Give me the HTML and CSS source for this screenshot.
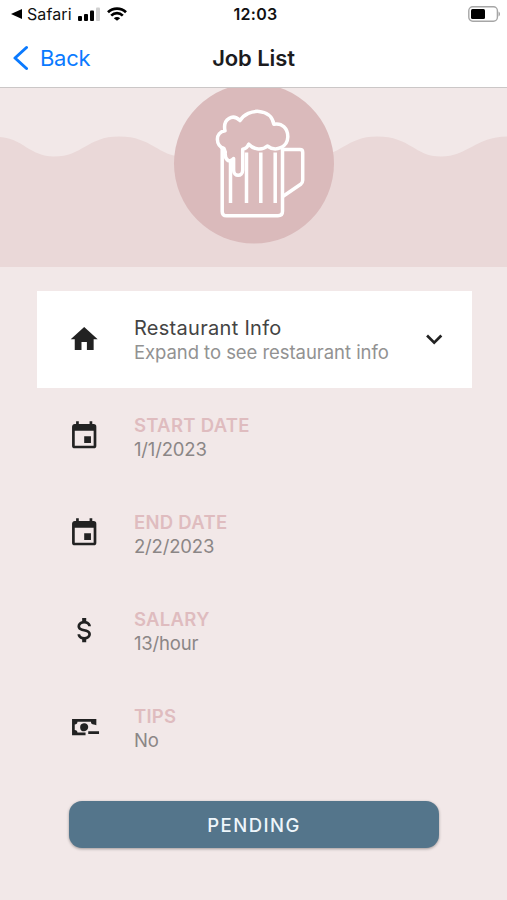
FILE: index.html
```html
<!DOCTYPE html>
<html lang="en">
<head>
  <meta charset="UTF-8">
  <meta name="viewport" content="width=device-width, initial-scale=1.0">
  <title>Job List</title>
  <link rel="stylesheet" href="styles.css">
</head>
<body>
  <div class="status-bar">
    <div class="status-left">
      <svg class="back-app" width="11" height="10" viewBox="0 0 11 10"><path d="M0 5 11 0v10z"/></svg>
      <span class="app-name">Safari</span>
      <svg class="signal" width="22" height="14" viewBox="0 0 22 14">
        <rect x="0" y="9" width="4" height="5" rx="1"/>
        <rect x="6" y="7" width="4" height="7" rx="1"/>
        <rect x="12" y="3.5" width="4" height="10.5" rx="1"/>
        <rect x="18" y="0.5" width="4" height="13.5" rx="1" fill="#d0d0d0"/>
      </svg>
      <svg width="20" height="14" viewBox="0 0 20 14" fill="none" stroke="#000" stroke-width="2.7">
        <path d="M1 5.2C6 .3 14 .3 19 5.2M4.2 8.6c3.3-3.2 8.3-3.2 11.6 0"/>
        <path d="M10 13.8 6.8 11.3c1.8-1.7 4.6-1.7 6.4 0z" fill="#000" stroke="none"/>
      </svg>
    </div>
    <span class="time">12:03</span>
    <svg class="battery" width="33" height="16" viewBox="0 0 33 16">
      <rect x="1.800" y="0.8" width="28.6" height="14.4" rx="4" fill="none" stroke="#a6a6a6" stroke-width="1.4"/>
      <rect x="4" y="3" width="14" height="10" rx="1.5"/>
      <path d="M31.500 5.5c2 .8 2 4.200 0 5z" fill="#a6a6a6"/>
    </svg>
  </div>

  <header>
    <a class="back">
      <svg width="16" height="26" viewBox="0 0 16 26"><path d="M14.500 2.500 3 13l11.500 10.500" fill="none" stroke="#0a7aff" stroke-width="3" stroke-linecap="round" stroke-linejoin="round"/></svg>
      <span>Back</span>
    </a>
    <h1>Job List</h1>
  </header>

  <svg class="banner" width="507" height="179" viewBox="0 88 507 179">
    <path fill="#ead8d8" d="M0 137C22 138 30 156.500 54 156.500C83 156.500 87 136.500 119 136.500C153 136.500 157 156.500 184 156.500C212 156.500 218 136.500 249 136.500C281 136.500 286 156.500 313 156.500C341 156.500 346 136.500 377 136.500C411 136.500 414 156.500 441 156.500C467 156.500 476 137 507 136.500V267H0z"/>
    <circle cx="254" cy="163.5" r="80" fill="#dababb"/>
    <g fill="none" stroke="#fff" stroke-width="3.5" stroke-linejoin="round" stroke-linecap="round">
      <path d="M222.200 148V211.500q0 4.300 4.300 4.300h51.500q4.500 0 4.500-4.500V149"/>
      <path d="M283 149.600h17q2.700 0 2.700 2.700v28q0 2.500-2 4L283.500 196"/>
      <path d="M230.500 160v43M246.500 152.500v50.500M260.800 152.500v50.500M275.200 152.500v50.500" stroke-linecap="butt"/>
      <path d="M224 148.500C215.500 146 214.500 132.500 225 130.800C222.500 118.500 233 113.500 240 120.600C248 107.500 271 108 273.800 124.200C282 122.500 288 128.500 287.800 137C287.500 147 276 152.500 267.300 146C262.500 150.500 254 150 248.700 144.200Q247 148.800 242.700 149.300V170C242.700 177 233.600 177 233.600 170V158.500Q231.500 161.500 228 160.500Q224.500 158 225.300 152z"/>
    </g>
  </svg>

  <main>
    <div class="row card">
      <svg class="icon" viewBox="0 0 24 24"><path d="M10 20v-6h4v6h5v-8h3L12 3 2 12h3v8z"/></svg>
      <div class="text">
        <div class="name">Restaurant Info</div>
        <div class="value expand">Expand to see restaurant info</div>
      </div>
      <svg class="icon" viewBox="0 0 24 24"><path d="M7.410 8.580 12 13.170l4.590-4.590L18 10l-6 6-6-6z"/></svg>
    </div>
    <div class="row">
      <svg class="icon" viewBox="0 0 24 24"><path d="M19 19H5V8h14m-3-7v2H8V1H6v2H5c-1.110 0-2 .89-2 2v14a2 2 0 0 0 2 2h14a2 2 0 0 0 2-2V5a2 2 0 0 0-2-2h-1V1m-1 11h-5v5h5z"/></svg>
      <div class="text">
        <div class="label">START DATE</div>
        <div class="value">1/1/2023</div>
      </div>
    </div>
    <div class="row">
      <svg class="icon" viewBox="0 0 24 24"><path d="M19 19H5V8h14m-3-7v2H8V1H6v2H5c-1.110 0-2 .89-2 2v14a2 2 0 0 0 2 2h14a2 2 0 0 0 2-2V5a2 2 0 0 0-2-2h-1V1m-1 11h-5v5h5z"/></svg>
      <div class="text">
        <div class="label">END DATE</div>
        <div class="value">2/2/2023</div>
      </div>
    </div>
    <div class="row">
      <svg class="icon" viewBox="0 0 24 24"><path d="M7 15h2c0 1.080 1.370 2 3 2s3-.92 3-2c0-1.100-1.040-1.500-3.240-2.030C9.640 12.440 7 11.780 7 9c0-1.790 1.470-3.310 3.500-3.820V3h3v2.180C15.530 5.690 17 7.210 17 9h-2c0-1.080-1.370-2-3-2s-3 .92-3 2c0 1.100 1.040 1.500 3.240 2.030C14.360 11.560 17 12.220 17 15c0 1.790-1.470 3.310-3.500 3.820V21h-3v-2.180C8.470 18.310 7 16.790 7 15z"/></svg>
      <div class="text">
        <div class="label">SALARY</div>
        <div class="value">13/hour</div>
      </div>
    </div>
    <div class="row">
      <svg class="icon" viewBox="0 0 24 24"><path d="M15 15v2h8v-2zM14.970 11.610A3 3 0 1 0 12 15c1.100 0 2.200-.8 2.600-1.700q.4-.9.370-1.690M13 16H7a2 2 0 0 0-2-2v-4a2 2 0 0 0 2-2h10a2 2 0 0 0 2 2v.06c.67 0 1.340.2 2 .5V6H3v12h10z"/></svg>
      <div class="text">
        <div class="label">TIPS</div>
        <div class="value">No</div>
      </div>
    </div>
    <button class="pending">PENDING</button>
  </main>
</body>
</html>
```
FILE: styles.css
```css
body {
  margin: 0;
  height: 900px;
  overflow: hidden;
  background: #f2e8e8;
  font-family: 'Inter', sans-serif;
}

svg {
  display: block;
  flex-shrink: 0;
}

.status-bar {
  display: grid;
  grid-template-columns: 1fr auto 1fr;
  align-items: center;
  height: 28px;
  padding: 0 7px 0 11px;
  background: #fff;
  color: #111;
}

.status-left {
  display: flex;
  align-items: center;
}

.app-name {
  margin: 0 6px 0 5px;
  font-size: 16px;
  letter-spacing: 0.1px;
}

.signal {
  margin-right: 7px;
}

.time {
  font-size: 16px;
  font-weight: 600;
  letter-spacing: 0.3px;
}

.battery {
  justify-self: end;
}

header {
  display: grid;
  grid-template-columns: 1fr auto 1fr;
  align-items: center;
  height: 59px;
  padding: 0 12px;
  background: #fff;
  border-bottom: 1px solid #cbc7c7;
}

.back {
  display: flex;
  align-items: center;
  gap: 12px;
  color: #0a7aff;
  font-size: 22px;
  letter-spacing: -0.3px;
}

h1 {
  margin: 0;
  font-size: 22px;
  font-weight: 600;
  letter-spacing: -0.1px;
  color: #1c1c1e;
}

main {
  padding: 24px 35px 0 37px;
}

.row {
  display: flex;
  align-items: center;
  height: 97px;
  padding: 0 22px 0 31px;
  box-sizing: border-box;
}

.card {
  background: #fff;
}

.icon {
  width: 32.4px;
  height: 32.4px;
  margin-top: -1px;
  fill: #222;
}

.text {
  flex: 1;
  margin-left: 33.5px;
  font-size: 18.5px;
  line-height: 24px;
  white-space: nowrap;
}

.name {
  font-size: 20px;
  letter-spacing: 0.3px;
  color: #444;
}

.label {
  font-weight: 600;
  letter-spacing: 0.3px;
  color: #dfbcbf;
}

.value {
  letter-spacing: -0.15px;
  color: #8b8686;
}

.expand {
  letter-spacing: -0.05px;
  color: #929292;
}

.pending {
  display: block;
  width: 370px;
  height: 47px;
  margin: 25px 0 0 32px;
  padding: 0;
  border: none;
  border-radius: 13px;
  background: #54758b;
  box-shadow: 0 1px 3px rgba(0, 0, 0, 0.35);
  color: #eef6fb;
  font-family: inherit;
  font-size: 18.5px;
  font-weight: 500;
  letter-spacing: 1.5px;
}
```
